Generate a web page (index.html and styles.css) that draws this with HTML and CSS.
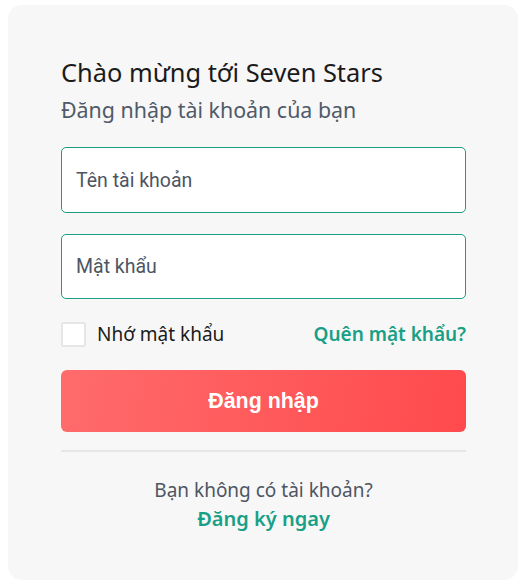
FILE: index.html
```html
<!DOCTYPE html>
<html lang="vi">
<head>
<meta charset="utf-8">
<title>Seven Stars - Đăng nhập</title>
<link rel="stylesheet" href="styles.css">
</head>
<body>
<main class="card">
  <h1 class="title">Chào mừng tới Seven Stars</h1>
  <p class="subtitle">Đăng nhập tài khoản của bạn</p>
  <form class="form">
    <input class="field" type="text" placeholder="Tên tài khoản">
    <input class="field" type="password" placeholder="Mật khẩu">
    <div class="options">
      <label class="remember"><span class="box"></span><span>Nhớ mật khẩu</span></label>
      <a class="link forgot" href="#">Quên mật khẩu?</a>
    </div>
    <button class="submit" type="button">Đăng nhập</button>
  </form>
  <div class="divider"></div>
  <div class="footer">
    <p class="footer-text">Bạn không có tài khoản?</p>
    <a class="link signup" href="#">Đăng ký ngay</a>
  </div>
</main>
</body>
</html>
```
FILE: styles.css
```css
html, body { margin: 0; padding: 0; background: #ffffff; }
body { padding: 5px 9px 7px 8px; font-family: "Noto Sans", "Liberation Sans", sans-serif; }
.card {
  background: #f7f7f7;
  border-radius: 14px;
  padding: 52px 52px 40px 53px;
  height: 575px;
  box-sizing: border-box;
  display: flex;
  flex-direction: column;
}
.card > * { flex-shrink: 0; }
.title { margin: 0; font-size: 25.4px; font-weight: 400; color: #1b1b1b; line-height: 30px; }
.subtitle { margin: 9px 0 0; font-size: 21.4px; color: #505a68; line-height: 28px; }
.form { display: flex; flex-direction: column; margin-top: 23px; }
.field {
  height: 66px; box-sizing: border-box; border: 1px solid #1a9e84; border-radius: 5px;
  background: #fff; padding: 0 14px; font-family: Roboto, sans-serif; font-size: 19.5px; color: #333;
  outline: none;
}
.field + .field { margin-top: 21px; height: 65px; }
.field::placeholder { color: #4d5563; }
.options { display: flex; justify-content: space-between; align-items: center; margin-top: 22px; height: 26px; }
.remember { display: flex; align-items: center; gap: 11px; font-size: 19px; color: #1b1b1b; }
.box { width: 21px; height: 21px; background: #fff; border: 2px solid #e6e6e6; border-radius: 2px; }
.link { color: #17a085; text-decoration: none; font-weight: 600; }
.forgot { font-size: 19px; }
.submit {
  margin-top: 23px; height: 62px; border: none; border-radius: 6px;
  background: linear-gradient(100deg, #ff6b6b 0%, #ff4a4d 100%);
  color: #fff; font-family: "Liberation Sans", Arial, sans-serif; font-weight: 700; font-size: 21.4px;
}
.divider { height: 2px; background: #e6e6e6; margin-top: 18px; }
.footer { display: flex; flex-direction: column; align-items: center; margin-top: 25px; }
.footer-text { margin: 0; font-size: 19px; color: #4d5563; line-height: 26px; }
.signup { font-size: 20px; margin-top: 3px; line-height: 26px; }
```
